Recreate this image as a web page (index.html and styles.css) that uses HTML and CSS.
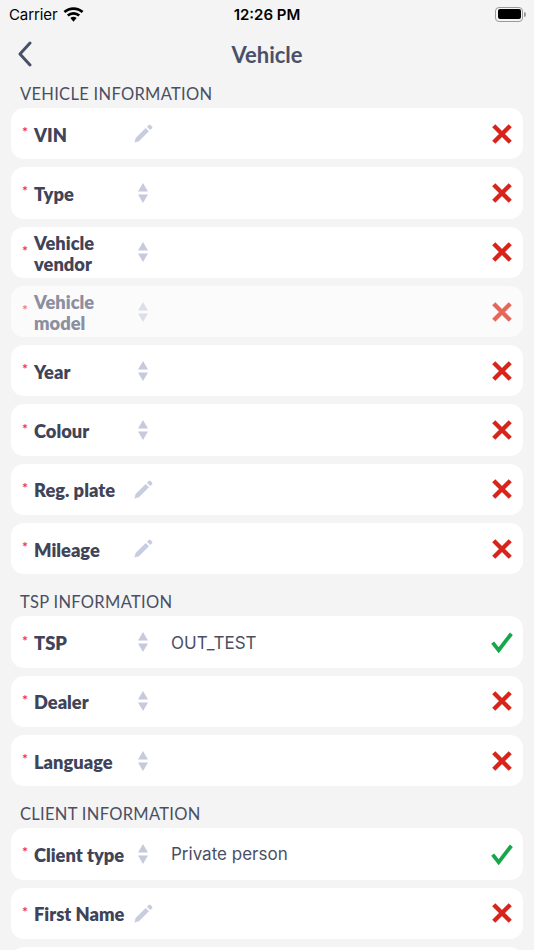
FILE: index.html
```html
<!DOCTYPE html>
<html>
<head>
<meta charset="utf-8">
<link rel="stylesheet" href="styles.css">
</head>
<body>
<svg width="0" height="0" class="defs">
  <defs>
    <symbol id="pencil" viewBox="0 0 24 24"><path d="M2.6 21.4l1.2-4.6L14.3 6.3l3.4 3.4L7.2 20.2z M15.6 5l1.9-1.9a1.2 1.2 0 0 1 1.7 0l1.7 1.7a1.2 1.2 0 0 1 0 1.7L19 8.4z"/></symbol>
    <symbol id="sort" viewBox="0 0 12 24"><path d="M1 10.5L6 2l5 8.5z M1 13.5h10L6 22z"/></symbol>
    <symbol id="cross" viewBox="0 0 20 20"><path d="M2.5 2.5l15 15M17.5 2.5l-15 15" fill="none" stroke="currentColor" stroke-width="4"/></symbol>
    <symbol id="check" viewBox="0 0 20 20"><path d="M1.5 10.5l5.5 7L18.5 2.5" fill="none" stroke="currentColor" stroke-width="3.4"/></symbol>
  </defs>
</svg>
<div class="status">
  <div class="carrier">Carrier
    <svg class="wifi" viewBox="0 0 20 14"><path d="M10 13.8l-3-3.4a4.5 4.5 0 0 1 6 0z M10 7.2a6.8 6.8 0 0 1 4.6 1.8l1.7-1.9A9.4 9.4 0 0 0 10 4.6a9.4 9.4 0 0 0-6.3 2.5l1.7 1.9A6.8 6.8 0 0 1 10 7.2z M10 2.6a11.6 11.6 0 0 1 7.8 3l1.7-1.9A14.2 14.2 0 0 0 10 0 14.2 14.2 0 0 0 .5 3.7l1.7 1.9A11.6 11.6 0 0 1 10 2.6z"/></svg>
  </div>
  <div class="time">12:26 PM</div>
  <div class="battery"><span class="batt-body"><span class="batt-fill"></span></span><span class="batt-nub"></span></div>
</div>
<div class="nav">
  <svg class="back" viewBox="0 0 16 26"><path d="M13 2L3 13l10 11" fill="none" stroke="currentColor" stroke-width="3" stroke-linecap="round" stroke-linejoin="round"/></svg>
  <div class="title">Vehicle</div>
</div>

<section class="section first">
  <div class="sec-head">VEHICLE INFORMATION</div>
  <div class="list">
    <div class="card"><span class="req">*</span><span class="label">VIN</span><svg class="ico pen"><use href="#pencil"/></svg><span class="value"></span><svg class="state bad"><use href="#cross"/></svg></div>
    <div class="card"><span class="req">*</span><span class="label">Type</span><svg class="ico sort"><use href="#sort"/></svg><span class="value"></span><svg class="state bad"><use href="#cross"/></svg></div>
    <div class="card"><span class="req">*</span><span class="label">Vehicle vendor</span><svg class="ico sort"><use href="#sort"/></svg><span class="value"></span><svg class="state bad"><use href="#cross"/></svg></div>
    <div class="card disabled"><span class="req">*</span><span class="label">Vehicle model</span><svg class="ico sort"><use href="#sort"/></svg><span class="value"></span><svg class="state bad"><use href="#cross"/></svg></div>
    <div class="card"><span class="req">*</span><span class="label">Year</span><svg class="ico sort"><use href="#sort"/></svg><span class="value"></span><svg class="state bad"><use href="#cross"/></svg></div>
    <div class="card"><span class="req">*</span><span class="label">Colour</span><svg class="ico sort"><use href="#sort"/></svg><span class="value"></span><svg class="state bad"><use href="#cross"/></svg></div>
    <div class="card"><span class="req">*</span><span class="label">Reg. plate</span><svg class="ico pen"><use href="#pencil"/></svg><span class="value"></span><svg class="state bad"><use href="#cross"/></svg></div>
    <div class="card"><span class="req">*</span><span class="label">Mileage</span><svg class="ico pen"><use href="#pencil"/></svg><span class="value"></span><svg class="state bad"><use href="#cross"/></svg></div>
  </div>
</section>

<section class="section">
  <div class="sec-head">TSP INFORMATION</div>
  <div class="list">
    <div class="card"><span class="req">*</span><span class="label">TSP</span><svg class="ico sort"><use href="#sort"/></svg><span class="value">OUT_TEST</span><svg class="state good"><use href="#check"/></svg></div>
    <div class="card"><span class="req">*</span><span class="label">Dealer</span><svg class="ico sort"><use href="#sort"/></svg><span class="value"></span><svg class="state bad"><use href="#cross"/></svg></div>
    <div class="card"><span class="req">*</span><span class="label">Language</span><svg class="ico sort"><use href="#sort"/></svg><span class="value"></span><svg class="state bad"><use href="#cross"/></svg></div>
  </div>
</section>

<section class="section">
  <div class="sec-head">CLIENT INFORMATION</div>
  <div class="list">
    <div class="card"><span class="req">*</span><span class="label">Client type</span><svg class="ico sort"><use href="#sort"/></svg><span class="value">Private person</span><svg class="state good"><use href="#check"/></svg></div>
    <div class="card"><span class="req">*</span><span class="label">First Name</span><svg class="ico pen"><use href="#pencil"/></svg><span class="value"></span><svg class="state bad"><use href="#cross"/></svg></div>
    <div class="card"></div>
  </div>
</section>
</body>
</html>
```
FILE: styles.css
```css
html, body {
  margin: 0;
  padding: 0;
  background: #f4f4f4;
  overflow: hidden;
}
body {
  width: 534px;
  height: 950px;
  font-family: Lato, "Open Sans", sans-serif;
  color: #434859;
}
.defs { position: absolute; }

.status {
  height: 28px;
  display: flex;
  align-items: center;
  justify-content: space-between;
  padding: 0 8px 0 9px;
  font-family: Inter, "Noto Sans", sans-serif;
  color: #000;
  position: relative;
}
.carrier {
  display: flex;
  align-items: center;
  gap: 6px;
  font-size: 15px;
  letter-spacing: -0.1px;
}
.wifi { width: 21px; height: 15px; fill: #000; }
.time {
  position: absolute;
  left: 0; right: 0;
  text-align: center;
  font-size: 15px;
  font-weight: 600;
  pointer-events: none;
}
.battery { display: flex; align-items: center; gap: 1px; }
.batt-body {
  width: 23px;
  height: 10px;
  border: 1.5px solid #9a9a9a;
  border-radius: 4px;
  padding: 1.5px;
  display: flex;
}
.batt-fill { flex: 1; background: #000; border-radius: 2px; }
.batt-nub { width: 2px; height: 5px; background: #9a9a9a; border-radius: 0 2px 2px 0; }

.nav {
  height: 52px;
  display: flex;
  align-items: center;
  justify-content: center;
  position: relative;
}
.back {
  position: absolute;
  left: 17px;
  top: 13px;
  width: 16px;
  height: 26px;
  color: #4a5068;
}
.title {
  font-size: 22px;
  font-weight: 700;
  color: #4a5068;
}

.section { margin-top: 14px; }
.section.first { margin-top: 0; }
.sec-head {
  height: 28px;
  line-height: 28px;
  padding-left: 20px;
  font-size: 16.5px;
  letter-spacing: 0.3px;
  color: #4a4f63;
}
.list {
  display: flex;
  flex-direction: column;
  gap: 8px;
  padding: 0 11px;
}
.card {
  height: 51.3px;
  flex: none;
  box-sizing: border-box;
  background: #fff;
  border-radius: 13px;
  display: flex;
  align-items: center;
  padding: 0 10px 0 11px;
}
.req {
  width: 12px;
  flex: none;
  align-self: center;
  font-size: 14px;
  font-weight: 700;
  color: #ee2f66;
  margin-top: -4px;
}
.label {
  width: 99px;
  flex: none;
  font-size: 18.3px;
  font-weight: 800;
  line-height: 21px;
  padding-top: 3px;
  color: #3f4459;
}
.ico { flex: none; fill: #c8cce0; }
.ico.pen { width: 23px; height: 23px; margin-left: -1px; margin-right: 15px; }
.ico.sort { width: 12px; height: 24px; margin-left: 4px; margin-right: 22px; fill: #c6cadc; }
.value {
  flex: 1;
  font-family: Inter, "Noto Sans", sans-serif;
  font-size: 17px;
  padding-top: 1px;
  color: #4a4f63;
}
.state { width: 22px; height: 22px; flex: none; }
.state.bad { color: #d8251b; }
.state.good { color: #15a84a; }

.card.disabled { background: #fbfbfb; }
.card.disabled .label { color: #8b8f9f; }
.card.disabled .req { color: #f27898; }
.card.disabled .ico { fill: #dcdfea; }
.card.disabled .state.bad { color: #e5675a; }
```
